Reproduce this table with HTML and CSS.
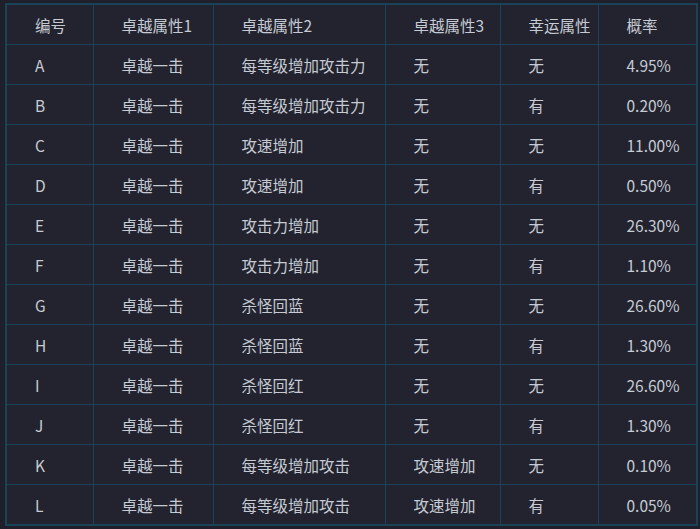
FILE: index.html
```html
<!DOCTYPE html>
<html lang="zh">
<head>
<meta charset="utf-8">
<link rel="stylesheet" href="styles.css">
</head>
<body>
<table class="grid">
  <colgroup>
    <col class="c1"><col class="c2"><col class="c3"><col class="c4"><col class="c5"><col class="c6">
  </colgroup>
  <thead>
    <tr><th>编号</th><th>卓越属性1</th><th>卓越属性2</th><th>卓越属性3</th><th>幸运属性</th><th>概率</th></tr>
  </thead>
  <tbody>
    <tr><td>A</td><td>卓越一击</td><td>每等级增加攻击力</td><td>无</td><td>无</td><td>4.95%</td></tr>
    <tr><td>B</td><td>卓越一击</td><td>每等级增加攻击力</td><td>无</td><td>有</td><td>0.20%</td></tr>
    <tr><td>C</td><td>卓越一击</td><td>攻速增加</td><td>无</td><td>无</td><td>11.00%</td></tr>
    <tr><td>D</td><td>卓越一击</td><td>攻速增加</td><td>无</td><td>有</td><td>0.50%</td></tr>
    <tr><td>E</td><td>卓越一击</td><td>攻击力增加</td><td>无</td><td>无</td><td>26.30%</td></tr>
    <tr><td>F</td><td>卓越一击</td><td>攻击力增加</td><td>无</td><td>有</td><td>1.10%</td></tr>
    <tr><td>G</td><td>卓越一击</td><td>杀怪回蓝</td><td>无</td><td>无</td><td>26.60%</td></tr>
    <tr><td>H</td><td>卓越一击</td><td>杀怪回蓝</td><td>无</td><td>有</td><td>1.30%</td></tr>
    <tr><td>I</td><td>卓越一击</td><td>杀怪回红</td><td>无</td><td>无</td><td>26.60%</td></tr>
    <tr><td>J</td><td>卓越一击</td><td>杀怪回红</td><td>无</td><td>有</td><td>1.30%</td></tr>
    <tr><td>K</td><td>卓越一击</td><td>每等级增加攻击</td><td>攻速增加</td><td>无</td><td>0.10%</td></tr>
    <tr><td>L</td><td>卓越一击</td><td>每等级增加攻击</td><td>攻速增加</td><td>有</td><td>0.05%</td></tr>
  </tbody>
</table>
</body>
</html>
```

FILE: styles.css
```css
html, body {
  margin: 0;
  padding: 0;
  background: #1e1f2b;
}
body {
  padding: 3px 5px;
  font-family: "Noto Sans CJK SC", "Noto Sans", sans-serif;
  font-size: 15.5px;
  color: #c6cad2;
}
.grid {
  border-collapse: collapse;
  table-layout: fixed;
  width: 691px;
  background: #22232f;
  border: 2px solid #1a4358;
}
.c1 { width: 87px; }
.c2 { width: 120px; }
.c3 { width: 172px; }
.c4 { width: 115px; }
.c5 { width: 98px; }
.c6 { width: 99px; }
.grid th, .grid td {
  border: 1px solid #1a4358;
  height: 39px;
  padding: 0 0 0 28px;
  text-align: left;
  font-weight: normal;
  white-space: nowrap;
  line-height: 20px;
}
```
